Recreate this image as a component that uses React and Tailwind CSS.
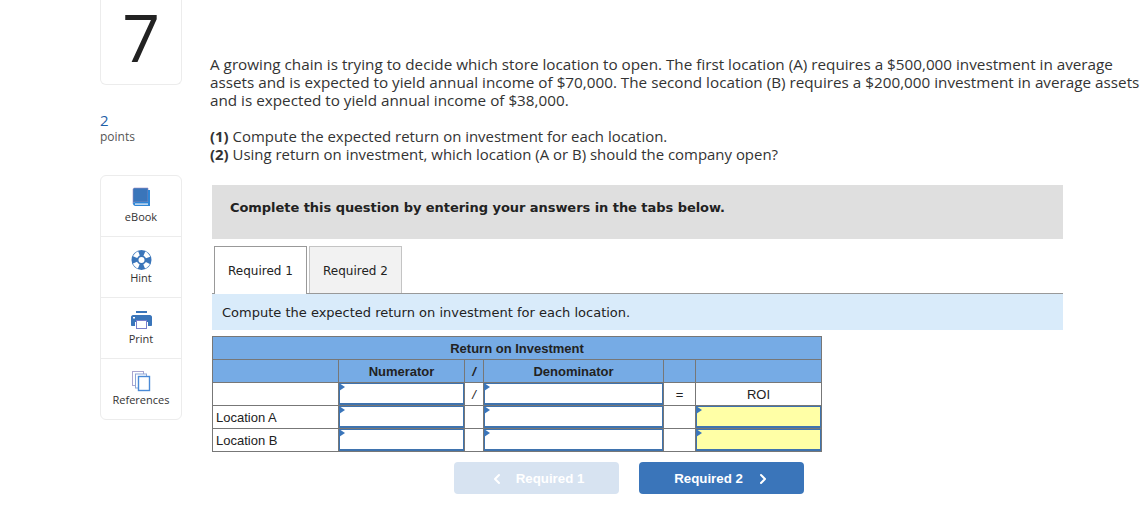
import { ChevronLeft, ChevronRight } from 'lucide-react'

const BookIcon = () => (
  <svg width="19" height="20" viewBox="0 0 19 20">
    <path d="M1 2.500C1 1.700 1.700 1 2.500 1H16v14H3.500C2 15 1 15.700 1 16.500V2.500z" fill="#3a75ba" stroke="#9a8fc4" strokeWidth=".6" />
    <path d="M16 3h2v16H3.500C2 19 1 18 1 16.800 1 15.700 2 15 3.500 15H16V3z" fill="#2f86d6" />
    <path d="M3 16.500h13v1.200H3z" fill="#f2f4f8" />
  </svg>
)

const HintIcon = () => (
  <svg width="21" height="21" viewBox="0 -1.500 21 21" className="overflow-visible">
    <circle cx="10.500" cy="10.500" r="10" fill="#3a75ba" />
    <circle cx="10.500" cy="10.500" r="7" fill="none" stroke="#fff" strokeWidth="4.500" strokeDasharray="5.500 5.500" strokeDashoffset="2.750" transform="rotate(45 10.500 10.500)" />
    <circle cx="10.500" cy="10.500" r="3" fill="#fff" />
  </svg>
)

const PrintIcon = () => (
  <svg width="21" height="20" viewBox="0 0 21 20">
    <path d="M5 2h11v2H5z" fill="#3a75ba" />
    <path d="M2 6h17c1 0 2 1 2 2v8c0 .6-.4 1-1 1h-3v-4H4v4H1c-.6 0-1-.4-1-1V8c0-1 1-2 2-2z" fill="#3a75ba" />
    <rect x="5.500" y="11.500" width="10" height="8" fill="#fff" stroke="#7a7fcc" />
    <rect x="2" y="8" width="2" height="1.500" fill="#fff" />
  </svg>
)

const ReferencesIcon = () => (
  <svg width="20" height="21" viewBox="0 -1 20 21" fill="#fff" className="overflow-visible">
    <rect x="1.500" y="0.500" width="11" height="14" stroke="#a9a6d0" />
    <rect x="4.500" y="3" width="11" height="14" stroke="#8da6d8" />
    <rect x="7.500" y="5.500" width="11" height="14" stroke="#4a8ad6" strokeWidth="1.400" />
  </svg>
)

const tools = [
  { label: 'eBook', icon: <BookIcon /> },
  { label: 'Hint', icon: <HintIcon /> },
  { label: 'Print', icon: <PrintIcon /> },
  { label: 'References', icon: <ReferencesIcon /> },
]

function Sidebar() {
  return (
    <div className="w-[82px] shrink-0">
      <div className="h-[85px] border-x border-b border-[#ececec] rounded-b-md flex justify-center items-start">
        <span className="text-[66px] leading-[72px] text-[#222] font-['Open_Sans',sans-serif]">7</span>
      </div>
      <div className="mt-[25px] text-[15px] leading-[20px] text-[#1f5fa8]">2</div>
      <div className="text-[12px] leading-[14px] text-[#555]">points</div>
      <div className="mt-[31px] border border-[#ececec] rounded-md">
        {tools.map((t, i) => (
          <div
            key={t.label}
            className={i < 3
              ? 'h-[61px] flex flex-col items-center pt-[10px] border-b border-[#ececec]'
              : 'h-[60px] flex flex-col items-center pt-[10px]'}
          >
            <div className="h-[22px] flex items-center">{t.icon}</div>
            <div className="mt-[1px] text-[11px] leading-[16px] text-[#333]">{t.label}</div>
          </div>
        ))}
      </div>
    </div>
  )
}

// blue triangle in the corner of an answer cell
function AnswerCell({ yellow }) {
  return (
    <td className="border border-[#777] p-0 h-[23px]">
      <div className={`relative h-[22px] border border-b-2 border-[#3f73ae] ${yellow ? 'bg-[#ffffa6]' : 'bg-white'}`}>
        <span className="absolute -left-[1px] -top-[1px] w-0 h-0 border-y-[4px] border-y-transparent border-l-[6px] border-l-[#3a75ba]" />
      </div>
    </td>
  )
}

function RoiTable() {
  const hd = 'border border-[#777] bg-[#76abe5] p-0 font-bold text-[#222] text-center'
  const td = 'border border-[#777] p-0 text-[#222]'
  return (
    <table className="mt-[6px] w-[609px] table-fixed border-collapse font-['Liberation_Sans',sans-serif] text-[13px] leading-[15px]">
      <colgroup>
        <col className="w-[126px]" />
        <col className="w-[126px]" />
        <col className="w-[19px]" />
        <col className="w-[180px]" />
        <col className="w-[32px]" />
        <col className="w-[126px]" />
      </colgroup>
      <tbody>
        <tr className="h-[23px]">
          <td colSpan={6} className={hd}>Return on Investment</td>
        </tr>
        <tr className="h-[23px]">
          <td className={hd}></td>
          <td className={hd}>Numerator</td>
          <td className={hd}><i>/</i></td>
          <td className={hd}>Denominator</td>
          <td className={hd}></td>
          <td className={hd}></td>
        </tr>
        <tr className="h-[23px]">
          <td className={td}></td>
          <AnswerCell />
          <td className={td + ' text-center'}><i>/</i></td>
          <AnswerCell />
          <td className={td + ' text-center'}>=</td>
          <td className={td + ' text-center'}>ROI</td>
        </tr>
        {['Location A', 'Location B'].map((loc) => (
          <tr key={loc} className="h-[23px]">
            <td className={td + ' pl-[3px]'}>{loc}</td>
            <AnswerCell />
            <td className={td}></td>
            <AnswerCell />
            <td className={td}></td>
            <AnswerCell yellow />
          </tr>
        ))}
      </tbody>
    </table>
  )
}

export default function App() {
  return (
    <div className="w-[1148px] h-[506px] overflow-hidden bg-white flex pl-[100px] font-['Open_Sans',sans-serif]">
      <Sidebar />
      <div className="ml-[28px] w-[938px] shrink-0">
        <div className="mt-[55px] text-[15.250px] leading-[18px] text-[#333] whitespace-nowrap">
          <p>
            A growing chain is trying to decide which store location to open. The first location (A) requires a $500,000 investment in average
            <br />
            assets and is expected to yield annual income of $70,000. The second location (B) requires a $200,000 investment in average assets
            <br />
            and is expected to yield annual income of $38,000.
          </p>
          <div className="mt-[18px] text-[14.950px]">
            <p><b>(1)</b> Compute the expected return on investment for each location.</p>
            <p><b>(2)</b> Using return on investment, which location (A or B) should the company open?</p>
          </div>
        </div>

        <div className="ml-[2px] w-[851px]">
          <div className="mt-[22px] h-[54px] bg-[#dfdfdf] pl-[18px] pt-[14px] font-['DejaVu_Sans',sans-serif] font-bold text-[13px] tracking-[-0.05px] leading-[18px] text-[#222]">
            Complete this question by entering your answers in the tabs below.
          </div>

          <div className="mt-[7px] flex items-end h-[48px] pl-[2px] gap-[2px] border-b border-[#999] font-['DejaVu_Sans',sans-serif] text-[12px] text-[#222]">
            <div className="w-[93px] h-[48px] -mb-px bg-white border border-b-0 border-[#999] flex items-center justify-center">Required 1</div>
            <div className="w-[93px] h-[47px] pt-[1px] bg-[#f2f2f2] border border-b-0 border-[#c4c4c4] flex items-center justify-center">Required 2</div>
          </div>

          <div className="h-[36px] pt-[1px] bg-[#d9ebfa] pl-[10px] flex items-center font-['DejaVu_Sans',sans-serif] text-[13px] text-[#222]">
            Compute the expected return on investment for each location.
          </div>

          <RoiTable />

          <div className="mt-[10px] ml-[242px] flex gap-[20px] font-['Liberation_Sans',sans-serif] font-bold text-[13.300px] text-white">
            <button className="w-[165px] h-[32px] pt-[1px] rounded-sm bg-[#d7e3f1] flex items-center justify-center gap-[11px]">
              <ChevronLeft size={16} strokeWidth={3} />
              Required 1
            </button>
            <button className="w-[165px] h-[32px] pt-[1px] pl-[2px] rounded-sm bg-[#3a75ba] flex items-center justify-center gap-[12px]">
              Required 2
              <ChevronRight size={16} strokeWidth={3} />
            </button>
          </div>
        </div>
      </div>
    </div>
  )
}
